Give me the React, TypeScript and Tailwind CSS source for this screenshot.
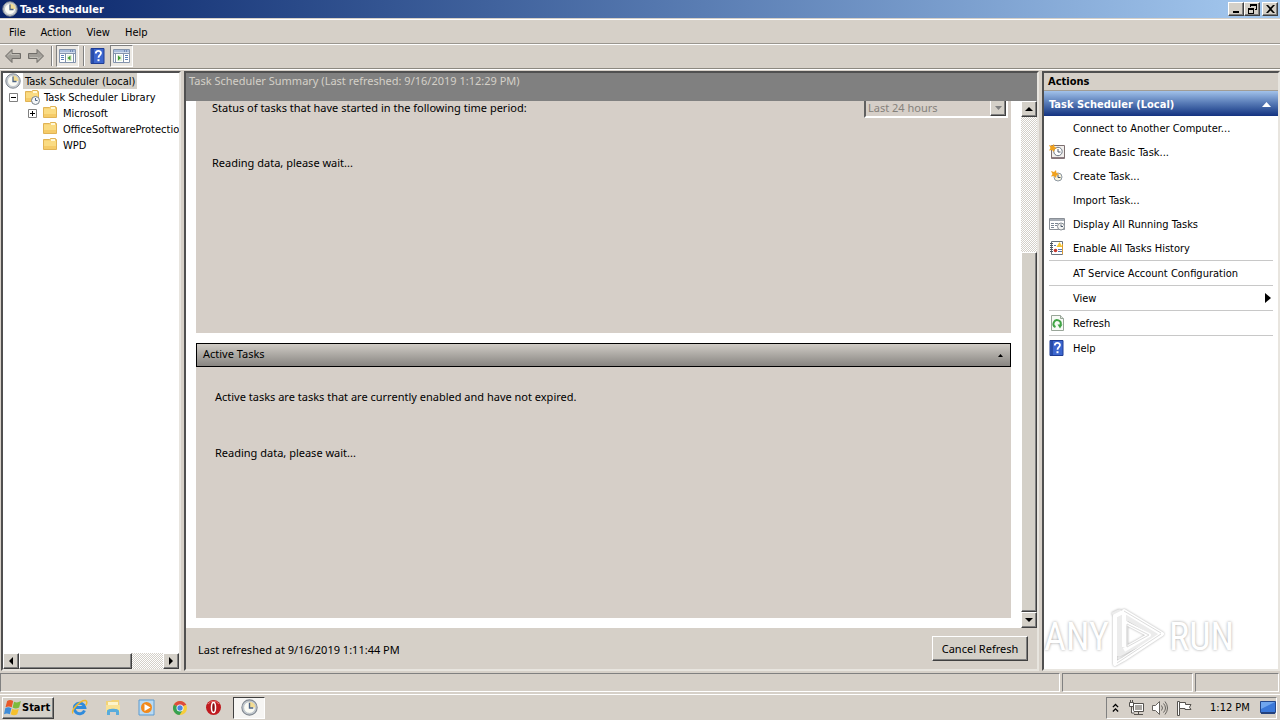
import type { ReactNode } from 'react';

const RAISED =
  'bg-[#d4d0c8] border border-t-white border-l-white border-b-[#404040] border-r-[#404040] shadow-[inset_-1px_-1px_0_#808080]';
const SUNKEN = 'border border-t-[#808080] border-l-[#808080] border-b-white border-r-white';
const PANEL =
  'border-2 border-t-[#505050] border-l-[#505050] border-b-[#e8e5df] border-r-[#e8e5df]';
const TRACK =
  'bg-[conic-gradient(#d4d0c8_25%,#fff_0_50%,#d4d0c8_0_75%,#fff_0)] bg-[length:2px_2px]';

export default function App() {
  return (
    <div className="flex h-screen flex-col overflow-hidden bg-[#d6d0c8] font-['DejaVu_Sans_Condensed','DejaVu_Sans',sans-serif] text-[11px] leading-4 text-black">
      <TitleBar />
      <MenuBar />
      <Toolbar />
      <div className="flex min-h-0 flex-1 gap-[3px] border-t border-white pt-px pl-px">
        <TreePanel />
        <SummaryPanel />
        <ActionsPanel />
      </div>
      <StatusBar />
      <Taskbar />
    </div>
  );
}

/* ── Window chrome ─────────────────────────────── */
function TitleBar() {
  return (
    <header className="flex h-[18px] items-center bg-linear-to-r from-[#0a246a] to-[#a6caf0] pr-[2px] pl-[2px]">
      <ClockIcon size={16} />
      <h1 className="ml-[2px] flex-1 pt-px font-bold text-white">Task Scheduler</h1>
      <CaptionButton label="Minimize"><path d="M3 8h6v2H3z" /></CaptionButton>
      <CaptionButton label="Restore">
        <path d="M4 1h7v6H9V6h1V3H5v1H4zM2 5h6v6H2zm1 2v3h4V7z" fillRule="evenodd" />
      </CaptionButton>
      <span className="w-[2px]" />
      <CaptionButton label="Close"><path d="M2 2h2l2.500 2.500L9 2h2L7.500 6 11 10h-2L6.500 7.500 4 10H2L5.500 6z" /></CaptionButton>
    </header>
  );
}

function CaptionButton({ label, children }: { label: string; children: ReactNode }) {
  return (
    <button aria-label={label} className={`flex h-[14px] w-4 items-center justify-center ${RAISED}`}>
      <svg width="13" height="12" viewBox="0 0 13 12">{children}</svg>
    </button>
  );
}

function MenuBar() {
  return (
    <nav className="mt-px flex h-[25px] items-center gap-[15px] border-t border-b border-t-white border-b-[#9a968f] pt-[2px] pl-[9px]">
      {['File', 'Action', 'View', 'Help'].map((m) => (
        <button key={m}>{m}</button>
      ))}
    </nav>
  );
}

function Toolbar() {
  return (
    <div className="flex h-[25px] items-center border-t border-b border-t-white border-b-[#8c8880] pb-px pl-1">
      <button aria-label="Back"><ArrowIcon /></button>
      <button aria-label="Forward" className="ml-[5px] rotate-180"><ArrowIcon /></button>
      <span className="mr-[3px] ml-[6px] h-5 w-[2px] border-l border-[#808080] bg-white" />
      <button aria-label="Show/Hide Console Tree" className={`flex h-[22px] w-[23px] items-center justify-center bg-[#ece9e4] ${SUNKEN}`}>
        <PaneIcon side="left" />
      </button>
      <span className="mr-[5px] ml-1 h-5 w-[2px] border-l border-[#808080] bg-white" />
      <button aria-label="Help"><HelpIcon /></button>
      <button aria-label="Show/Hide Action Pane" className={`ml-[5px] flex h-[22px] w-[23px] items-center justify-center bg-[#ece9e4] ${SUNKEN}`}>
        <PaneIcon side="right" />
      </button>
    </div>
  );
}

function ScrollButton({ label, d }: { label: string; d: string }) {
  return (
    <button aria-label={label} className={`flex size-4 shrink-0 items-center justify-center ${RAISED}`}>
      <svg width="8" height="8" viewBox="0 0 8 8"><path d={d} /></svg>
    </button>
  );
}

/* ── Console tree ──────────────────────────────── */
function TreePanel() {
  return (
    <aside className={`flex w-[180px] shrink-0 flex-col bg-white ${PANEL}`}>
      <ul className="flex-1 overflow-hidden leading-[14px] whitespace-nowrap">
        <li>
          <div className="flex h-4 items-center pl-[2px]">
            <ClockIcon size={16} />
            <span className="ml-[2px] bg-[#d4d0c8] px-[2px] pt-[2px]">Task Scheduler (Local)</span>
          </div>
          <ul>
            <li>
              <div className="flex h-4 items-center pl-[6px]">
                <Expander open />
                <span className="ml-[6px]"><FolderIcon clock /></span>
                <span className="ml-1 pt-[2px]">Task Scheduler Library</span>
              </div>
              <ul>
                <li className="flex h-4 items-center pl-[25px]">
                  <Expander />
                  <span className="ml-[5px]"><FolderIcon /></span>
                  <span className="ml-[5px] pt-[2px]">Microsoft</span>
                </li>
                {['OfficeSoftwareProtectio', 'WPD'].map((name) => (
                  <li key={name} className="flex h-4 items-center pl-[39px]">
                    <FolderIcon />
                    <span className="ml-[5px] pt-[2px]">{name}</span>
                  </li>
                ))}
              </ul>
            </li>
          </ul>
        </li>
      </ul>
      <div className={`flex h-4 ${TRACK}`}>
        <ScrollButton label="Scroll left" d="M6 0v8L2 4z" />
        <div className={`w-[113px] ${RAISED}`} />
        <span className="flex-1" />
        <ScrollButton label="Scroll right" d="M2 0v8l4-4z" />
      </div>
    </aside>
  );
}

function Expander({ open = false }: { open?: boolean }) {
  return (
    <button aria-label={open ? 'Collapse' : 'Expand'} className="shrink-0">
      <svg width="9" height="9" viewBox="0 0 9 9" className="block">
        <path d="M.5.5h8v8h-8z" fill="#fff" stroke="#808080" />
        <path d={open ? 'M2 4h5v1H2z' : 'M2 4h2V2h1v2h2v1H5v2H4V5H2z'} />
      </svg>
    </button>
  );
}

/* ── Summary ───────────────────────────────────── */
function SummaryPanel() {
  return (
    <main className={`flex min-w-0 flex-1 flex-col font-['Noto_Sans',sans-serif] ${PANEL}`}>
      <h2 className="h-7 shrink-0 bg-[#808080] pl-[3px] text-[#d4d0c8]">
        Task Scheduler Summary (Last refreshed: 9/16/2019 1:12:29 PM)
      </h2>
      <div className="flex min-h-0 flex-1 bg-white">
        <div className="flex flex-1 flex-col gap-[10px] overflow-hidden pr-[10px] pb-[10px] pl-[10px]">
          <section className="h-[232px] bg-[#d6cfc8] pr-[3px] pl-4">
            <div className="-mt-1 flex h-[21px] items-center justify-between">
              <label htmlFor="period" className="leading-[13px]">Status of tasks that have started in the following time period:</label>
              <div className="relative w-36">
                <select
                  id="period"
                  disabled
                  className="h-[21px] w-full appearance-none border-2 border-t-[#808080] border-r-white border-b-white border-l-[#606060] bg-[#d6cfc8] pl-[2px] text-[#85817b] opacity-100"
                >
                  <option>Last 24 hours</option>
                </select>
                <span className={`pointer-events-none absolute top-[2px] right-[2px] flex h-[17px] w-4 items-center justify-center ${RAISED}`}>
                  <svg width="7" height="4" viewBox="0 0 7 4" fill="#808080"><path d="M0 0h7L3.500 4z" /></svg>
                </span>
              </div>
            </div>
            <p className="mt-[37px]">Reading data, please wait...</p>
          </section>

          <section className="flex flex-1 flex-col">
            <button className="flex h-6 items-center justify-between border border-black bg-linear-to-b from-[#d0ccc6] to-[#888581] pr-[7px] pb-[2px] pl-[6px]">
              Active Tasks
              <svg width="5" height="3" viewBox="0 0 5 3" className="mt-[3px]"><path d="M0 3h5L2.500 0z" /></svg>
            </button>
            <div className="flex-1 bg-[#d6cfc8] pt-[22px] pl-[19px]">
              <p>Active tasks are tasks that are currently enabled and have not expired.</p>
              <p className="mt-10">Reading data, please wait...</p>
            </div>
          </section>
        </div>
        <div className={`flex w-4 flex-col ${TRACK}`}>
          <ScrollButton label="Scroll up" d="M0 6h8L4 2z" />
          <span className="h-[135px]" />
          <div className={`flex-1 ${RAISED}`} />
          <ScrollButton label="Scroll down" d="M0 2h8L4 6z" />
        </div>
      </div>
      <footer className="flex h-[41px] shrink-0 items-center justify-between pr-[9px] pl-3">
        <span className="pt-[2px]">Last refreshed at 9/16/2019 1:11:44 PM</span>
        <button className={`h-[25px] w-24 ${RAISED}`}>Cancel Refresh</button>
      </footer>
    </main>
  );
}

/* ── Actions ───────────────────────────────────── */
const ACTIONS: { label: string; icon?: ReactNode; line?: boolean; menu?: boolean }[] = [
  { label: 'Connect to Another Computer...' },
  { label: 'Create Basic Task...', icon: <BasicTaskIcon /> },
  { label: 'Create Task...', icon: <TaskIcon /> },
  { label: 'Import Task...' },
  { label: 'Display All Running Tasks', icon: <RunningIcon /> },
  { label: 'Enable All Tasks History', icon: <HistoryIcon /> },
  { label: 'AT Service Account Configuration', line: true },
  { label: 'View', line: true, menu: true },
  { label: 'Refresh', icon: <RefreshIcon />, line: true },
  { label: 'Help', icon: <HelpIcon />, line: true },
];

function ActionsPanel() {
  return (
    <aside className={`relative flex w-[238px] shrink-0 flex-col overflow-hidden bg-white ${PANEL}`}>
      <h2 className="h-[18px] border-b border-[#a09c94] bg-[#d6d0c8] pt-px pl-1 font-bold">Actions</h2>
      <button className="flex h-[25px] items-center justify-between bg-linear-to-b from-[#a2c2ea] via-[#5578b4] to-[#143280] pt-[2px] pr-[7px] pl-[5px] font-bold text-white">
        Task Scheduler (Local)
        <svg width="9" height="5" viewBox="0 0 9 5" fill="#fff"><path d="M0 5h9L4.500 0z" /></svg>
      </button>
      <ul className="px-[5px]">
        {ACTIONS.map((a) => (
          <li key={a.label} className={a.line ? 'border-t border-[#c8c8c8]' : ''}>
            <button className="flex h-6 w-full items-center text-left">
              <span className="flex w-6">{a.icon}</span>
              <span className="flex-1 pt-[2px]">{a.label}</span>
              {a.menu && <svg width="6" height="10" viewBox="0 0 6 10" className="mr-[2px]"><path d="M0 0v10l6-5z" /></svg>}
            </button>
          </li>
        ))}
      </ul>
      <Watermark />
    </aside>
  );
}

function Watermark() {
  return (
    <div className="pointer-events-none absolute bottom-0 left-0 flex h-16 items-center gap-1 font-['Roboto_Condensed','Liberation_Sans_Narrow',sans-serif] text-[38px] leading-none text-white [text-shadow:0_0_3px_#a0a0a0]">
      <span className="w-[61px]">ANY</span>
      <svg width="56" height="62" viewBox="0 0 56 62" fill="none" strokeLinejoin="round" className="drop-shadow-[0_0_1px_#aaa]">
        <path d="M4 10l6-3v40l38-19L15 9v32" stroke="#ececec" strokeWidth="7" />
        <path d="M15 41V5l38 23L15 53l-9 5V10l8-4M15 16l25 13-25 15" stroke="#fff" strokeWidth="4" />
        <path d="M15 5l37 22M8 57l44-29M18 18l22 11-22 12z" stroke="#dcdcdc" />
      </svg>
      <span>RUN</span>
    </div>
  );
}

/* ── Status bar and taskbar ────────────────────── */
function StatusBar() {
  return (
    <div className="mt-[2px] flex h-[19px] gap-[2px] pr-px">
      <div className={`flex-1 ${SUNKEN}`} />
      <div className={`w-[131px] ${SUNKEN}`} />
      <div className={`w-[84px] ${SUNKEN}`} />
    </div>
  );
}

function Taskbar() {
  return (
    <footer className="mt-[2px] flex h-[26px] items-center border-t border-white pr-[3px] pl-[2px]">
      <button className={`flex h-[22px] w-[52px] items-center pl-px font-bold ${RAISED}`}>
        <WindowsLogo />
        Start
      </button>
      <div className="ml-[17px] flex items-center gap-[17px]">
        <button aria-label="Internet Explorer"><IeIcon /></button>
        <button aria-label="Windows Explorer"><ExplorerIcon /></button>
        <button aria-label="Media Player"><MediaIcon /></button>
        <button aria-label="Chrome"><ChromeIcon /></button>
        <button aria-label="Opera"><OperaIcon /></button>
      </div>
      <button aria-label="Task Scheduler" className="ml-[11px] flex h-[22px] w-8 items-center justify-center border border-t-[#404040] border-r-white border-b-white border-l-[#404040] bg-[#f6f5f3]">
        <ClockIcon size={17} />
      </button>
      <div className={`ml-auto flex h-[22px] w-[171px] items-center pl-[5px] ${SUNKEN}`}>
        <svg width="7" height="10" viewBox="0 0 8 10" fill="none" stroke="#000" strokeWidth="1.500"><path d="M1 4l3-3 3 3M1 9l3-3 3 3" /></svg>
        <span className="ml-[9px]"><NetworkIcon /></span>
        <span className="ml-[7px]"><SpeakerIcon /></span>
        <span className="ml-2"><FlagIcon /></span>
        <time className="ml-[18px] flex-1 whitespace-nowrap">1:12 PM</time>
        <DesktopIcon />
      </div>
    </footer>
  );
}

/* ── Icons ─────────────────────────────────────── */
function ClockIcon({ size }: { size: number }) {
  return (
    <svg width={size} height={size} viewBox="0 0 16 16" className="block shrink-0">
      <circle cx="8" cy="8" r="7.200" fill="#c9ced4" stroke="#808890" />
      <circle cx="8" cy="8" r="5.500" fill="#fbfbf4" stroke="#a9b2bc" strokeWidth=".6" />
      <path d="M8 2.500A5.500 5.500 0 0 1 13.500 8H8z" fill="#f3dc92" />
      <path d="M8 3.500V8.500h3.500" fill="none" stroke="#4d6485" strokeWidth="1.300" />
    </svg>
  );
}

function FolderIcon({ clock = false }: { clock?: boolean }) {
  return (
    <svg width="16" height="16" viewBox="0 0 16 16" className="block shrink-0">
      <path d="M1.500 2.500h6l1-1h5v1h1v10h-13z" fill="#f7d274" stroke="#e0b355" />
      <path d="M2 4h12v8H2z" fill="#fadb82" />
      <path d="M2 9h12v3H2z" fill="#f5cb68" />
      <path d="M9 3h4" stroke="#fff8d8" strokeWidth="2" />
      {clock && (
        <g>
          <circle cx="11.500" cy="11.500" r="4" fill="#f4f6f8" stroke="#747e88" />
          <path d="M11.500 9v2.500h2" fill="none" stroke="#4d6485" />
        </g>
      )}
    </svg>
  );
}

function ArrowIcon() {
  return (
    <svg width="18" height="16" viewBox="0 0 18 16" className="block">
      <path d="M1.500 8L8 1.500v4h8.500v5H8v4z" fill="#a19e98" stroke="#6f6c68" strokeLinejoin="round" />
      <path d="M4 7.500L7 4.500v2h8" fill="none" stroke="#c0bdb6" />
    </svg>
  );
}

function PaneIcon({ side }: { side: 'left' | 'right' }) {
  return (
    <svg width="17" height="16" viewBox="0 0 17 16">
      <path d="M.5 1.500h16v13H.5z" fill="#fff" stroke="#8494ac" />
      <path d="M1 2h15v2.500H1z" fill="#a9bcda" />
      <path d="M11 3h1M13 3h1" stroke="#426091" />
      <path d="M1 5.500h15" stroke="#8494ac" />
      {side === 'left' ? (
        <g>
          <path d="M2 7.500h3M2 9.500h3M2 11.500h3" stroke="#5a7fb8" />
          <path d="M6.500 6v8M14.500 6v8" stroke="#8494ac" />
          <path d="M8 7h5v6H8z" fill="#e4f3da" />
          <path d="M11.500 7.500v5L8.500 10z" fill="#3f9a35" />
        </g>
      ) : (
        <g>
          <path d="M2.500 6v8" stroke="#8494ac" />
          <path d="M4 7h5v6H4z" fill="#e4f3da" />
          <path d="M5 7.500v5L8 10z" fill="#3f9a35" />
          <path d="M10.500 6v8" stroke="#8494ac" />
          <path d="M12 7.500h3M12 9.500h3M12 11.500h3" stroke="#5a7fb8" />
        </g>
      )}
    </svg>
  );
}

function HelpIcon() {
  return (
    <svg width="15" height="16" viewBox="0 0 15 16" className="block">
      <path d="M1 .5h13v15H1z" fill="#3c66cf" stroke="#1f3c94" />
      <path d="M1.500 1v14H4V1z" fill="#284ca8" />
      <path d="M5.800 5.500c0-3.500 5.200-3.200 5.200-.4 0 2-2.500 2.200-2.500 4.700" fill="none" stroke="#fff" strokeWidth="1.800" />
      <path d="M7.500 11.200h2v2h-2z" fill="#fff" />
    </svg>
  );
}

function Spark() {
  return <path d="M0 1l3 1 2-2 .5 3L8 4 5.500 5.500 5 8 3 6 0 6.500 1.500 4z" fill="#f0a21e" />;
}

function BasicTaskIcon() {
  return (
    <svg width="16" height="16" viewBox="0 0 16 16">
      <path d="M2.500 1.500h13v13h-13z" fill="#f2efec" stroke="#7c6f70" />
      <path d="M3 13h12v1.500H3z" fill="#8d7c82" />
      <circle cx="9" cy="7.500" r="4.200" fill="#fff" stroke="#707b88" />
      <path d="M9 5v3h2.500" fill="none" stroke="#48566a" />
      <Spark />
    </svg>
  );
}

function TaskIcon() {
  return (
    <svg width="16" height="16" viewBox="0 0 16 16">
      <circle cx="9" cy="9" r="4" fill="#f8f3dc" stroke="#8d98a4" />
      <path d="M9 6.500v3h2.500" fill="none" stroke="#48566a" />
      <g transform="translate(2 2)"><Spark /></g>
    </svg>
  );
}

function RunningIcon() {
  return (
    <svg width="16" height="16" viewBox="0 0 16 16">
      <path d="M.5 2.500h15v11H.5z" fill="#fff" stroke="#8a8f96" />
      <path d="M1 3h14v2H1z" fill="#a6adb6" />
      <path d="M2 7.500h3M6 7.500h3M2 9.500h3M6 9.500h2M2 11.500h3" stroke="#7c8794" />
      <circle cx="12" cy="10.500" r="3.500" fill="#f4f4f2" stroke="#858c94" />
      <path d="M12 8.500v2h2" fill="none" stroke="#48566a" />
    </svg>
  );
}

function HistoryIcon() {
  return (
    <svg width="16" height="16" viewBox="0 0 16 16">
      <path d="M2.500 1.500h11v13h-11z" fill="#fff" stroke="#68727e" />
      <path d="M1 3.500h3M1 5.500h3M1 7.500h3M1 9.500h3M1 11.500h3" stroke="#4f5864" />
      <path d="M10.500 2l3 5h-6z" fill="#f4c531" />
      <path d="M5 5.500h2M9 9.500h4M9 11.500h4" stroke="#5276b4" />
      <circle cx="6.500" cy="10.500" r="1.800" fill="#c4392f" />
      <path d="M13.500 4v10" stroke="#d99a35" />
    </svg>
  );
}

function RefreshIcon() {
  return (
    <svg width="16" height="16" viewBox="0 0 16 16">
      <path d="M2.500.5h9l3 3v12h-12z" fill="#f7faf6" stroke="#98a598" />
      <path d="M11.500.5v3h3" fill="#dce4dc" stroke="#98a598" />
      <path d="M6.500 12A3.600 3.600 0 1 1 11.500 10" fill="none" stroke="#3fa344" strokeWidth="2" />
      <path d="M8.500 9.500h5l-2.500 4z" fill="#3fa344" />
    </svg>
  );
}

function WindowsLogo() {
  return (
    <svg width="18" height="18" viewBox="0 0 17 16">
      <path d="M3 1.500c2-1.300 3.500-1.200 5.700 0L7.300 7.300C5.200 6.200 3.600 6.200 1.400 7.300z" fill="#e8592a" />
      <path d="M9.500 2c2 1 3.700 1 6.500-.5L14.300 7.500c-2.300 1.300-4 1.300-6.200 0z" fill="#7dbb3c" />
      <path d="M1.200 8.200c2-1.200 3.600-1.200 5.800 0L5.500 14c-2-1.200-3.600-1.200-5.500 0z" fill="#3f8cd8" />
      <path d="M7.800 8.600c2 1.100 3.900 1.100 6.200 0l-1.500 5.400c-2 1.200-4 1.200-6.200 0z" fill="#f6c02c" />
    </svg>
  );
}

function IeIcon() {
  return (
    <svg width="17" height="17" viewBox="0 0 17 17" fill="none" className="block">
      <path d="M13.500 11.500A5.300 5.300 0 1 1 13.800 8.500H4" stroke="#2f8bdc" strokeWidth="3" />
      <path d="M2 14.500C-1 12 9 1 14.500 1.500c2 .5 1.500 3 .3 4.700" stroke="#f0b92e" strokeWidth="1.500" />
    </svg>
  );
}

function ExplorerIcon() {
  return (
    <svg width="16" height="17" viewBox="0 0 16 17" className="block">
      <path d="M1 2h5l1-1h7v12H1z" fill="#f2d377" />
      <path d="M3 3h10v4H3z" fill="#fdf4cb" />
      <path d="M1 6h14v7H1z" fill="#f9e295" />
      <path d="M2 16v-4c0-3 12-3 12 0v4h-3v-3H5v3z" fill="#58acdc" />
    </svg>
  );
}

function MediaIcon() {
  return (
    <svg width="17" height="17" viewBox="0 0 17 17" className="block">
      <path d="M1 1h15v15H1z" fill="#b9daf3" stroke="#5d9bd0" />
      <circle cx="8.500" cy="8.500" r="5.500" fill="#f28a1c" />
      <path d="M6.500 5v7l6-3.500z" fill="#fff" />
    </svg>
  );
}

function ChromeIcon() {
  return (
    <svg width="16" height="16" viewBox="0 0 16 16" className="block">
      <circle cx="8" cy="8" r="7" fill="#f7cd3c" />
      <path d="M8 8L1.900 4.500A7 7 0 0 1 14.100 4.500z" fill="#dd4b3e" />
      <path d="M8 8L1.900 4.500A7 7 0 0 0 7.500 15L11 9.700z" fill="#38a152" />
      <path d="M8 4.500h6.100" stroke="#dd4b3e" />
      <circle cx="8" cy="8" r="3.500" fill="#fff" />
      <circle cx="8" cy="8" r="2.700" fill="#4a86e2" />
    </svg>
  );
}

function OperaIcon() {
  return (
    <svg width="17" height="17" viewBox="0 0 17 17" className="block">
      <circle cx="8.500" cy="8.500" r="7.500" fill="#c01a1f" />
      <path d="M3 5a7 7 0 0 1 11 0" stroke="#e87470" fill="none" />
      <ellipse cx="8.500" cy="8.500" rx="2" ry="5" fill="#8a0d10" stroke="#fff" strokeWidth="1.500" />
    </svg>
  );
}

function NetworkIcon() {
  return (
    <svg width="17" height="16" viewBox="0 0 17 16" fill="#fff" stroke="#55524e" className="block">
      <path d="M5.500 3.500h10v8h-10z" />
      <path d="M7 5h7v5H7z" fill="#a9a6a1" stroke="none" />
      <path d="M10.500 12v2M6 14.500h9" />
      <path d="M1.500 2.500h4v4h-4zM2.500 0v2M4.500 0v2M3.500 7v6h3" />
    </svg>
  );
}

function SpeakerIcon() {
  return (
    <svg width="16" height="16" viewBox="0 0 16 16" fill="#fff" stroke="#66635e" className="block">
      <path d="M.5 5.500h3l4-4v13l-4-4h-3z" />
      <path d="M9.500 5.500q2 2.500 0 5M11.500 3.500q4 4.500 0 9M13 1.500q5 6.500 0 13" fill="none" />
    </svg>
  );
}

function FlagIcon() {
  return (
    <svg width="16" height="16" viewBox="0 0 16 16" fill="#fff" stroke="#55524e" className="block">
      <path d="M1.500 1.500h2v14h-2z" />
      <path d="M3.500 2.500h6v2h5.500q-3 3 0 5H9v-1H3.500z" />
    </svg>
  );
}

function DesktopIcon() {
  return (
    <svg width="16" height="15" viewBox="0 0 16 15">
      <path d="M.5 1.500h15v11H.5z" fill="#3b78d8" stroke="#24488c" />
      <path d="M1 2h14L1 9z" fill="#70a6ee" />
      <path d="M1 12h14v2H1z" fill="#23417c" />
    </svg>
  );
}
